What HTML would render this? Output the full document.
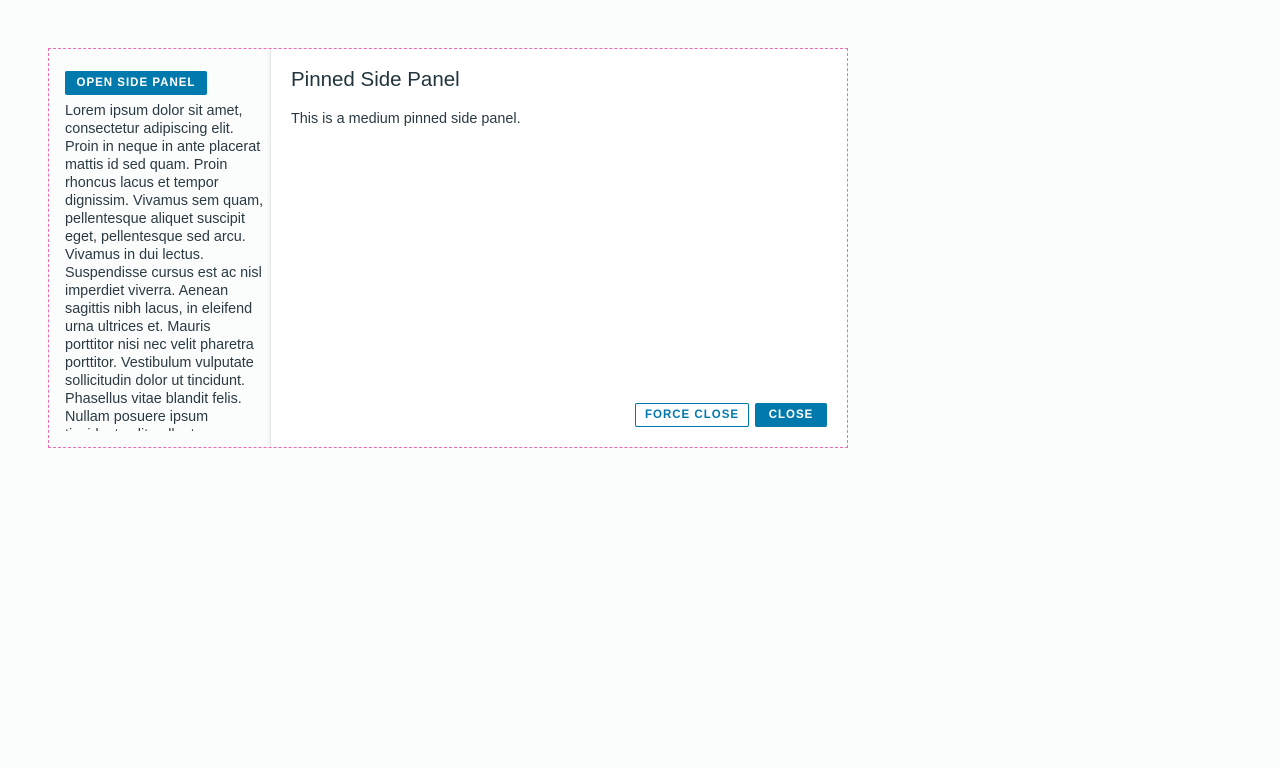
<!DOCTYPE html>
<html><head><style>
html,body{margin:0;padding:0;background:#fbfdfc;width:1280px;height:768px;overflow:hidden;font-family:"Liberation Sans",sans-serif;color:#2b3a42}
.box{position:absolute;left:48px;top:48px;width:798px;height:398px;border:1px dashed #f06bb4;}
.left{position:absolute;left:16px;top:0;width:210px;height:382px;overflow:hidden}
.btn{position:absolute;height:24px;box-sizing:border-box;font-size:11.5px;font-weight:bold;letter-spacing:1px;line-height:22px;text-align:center;border-radius:2px;border:1px solid #0079ad}
.pri{background:#0079ad;color:#fff}
.sec{background:#fff;color:#0079ad}
.txt{position:absolute;left:0;top:53px;font-size:14.4px;line-height:18px;white-space:nowrap;color:#2b3a42}
.panel{position:absolute;left:221px;top:0;width:576px;height:398px;background:#fff;border-left:1px solid #e4e8ea;box-shadow:-2px 0 3px rgba(0,0,0,0.04)}
h1{position:absolute;left:20px;top:19px;margin:0;font-size:20.5px;font-weight:normal;color:#21333b}
.p{position:absolute;left:20px;top:62px;font-size:14.4px;color:#2b3a42}
</style></head><body>
<div class="box">
 <div class="left">
  <div class="btn pri" style="left:0;top:22px;width:142px">OPEN SIDE PANEL</div>
  <div class="txt">Lorem ipsum dolor sit amet,<br>consectetur adipiscing elit.<br>Proin in neque in ante placerat<br>mattis id sed quam. Proin<br>rhoncus lacus et tempor<br>dignissim. Vivamus sem quam,<br>pellentesque aliquet suscipit<br>eget, pellentesque sed arcu.<br>Vivamus in dui lectus.<br>Suspendisse cursus est ac nisl<br>imperdiet viverra. Aenean<br>sagittis nibh lacus, in eleifend<br>urna ultrices et. Mauris<br>porttitor nisi nec velit pharetra<br>porttitor. Vestibulum vulputate<br>sollicitudin dolor ut tincidunt.<br>Phasellus vitae blandit felis.<br>Nullam posuere ipsum<br>tincidunt velit pellentesque</div>
 </div>
 <div class="panel">
  <h1>Pinned Side Panel</h1>
  <div class="p">This is a medium pinned side panel.</div>
  <div class="btn sec" style="left:364px;top:354px;width:114px">FORCE CLOSE</div>
  <div class="btn pri" style="left:484px;top:354px;width:72px">CLOSE</div>
 </div>
</div>
</body></html>
